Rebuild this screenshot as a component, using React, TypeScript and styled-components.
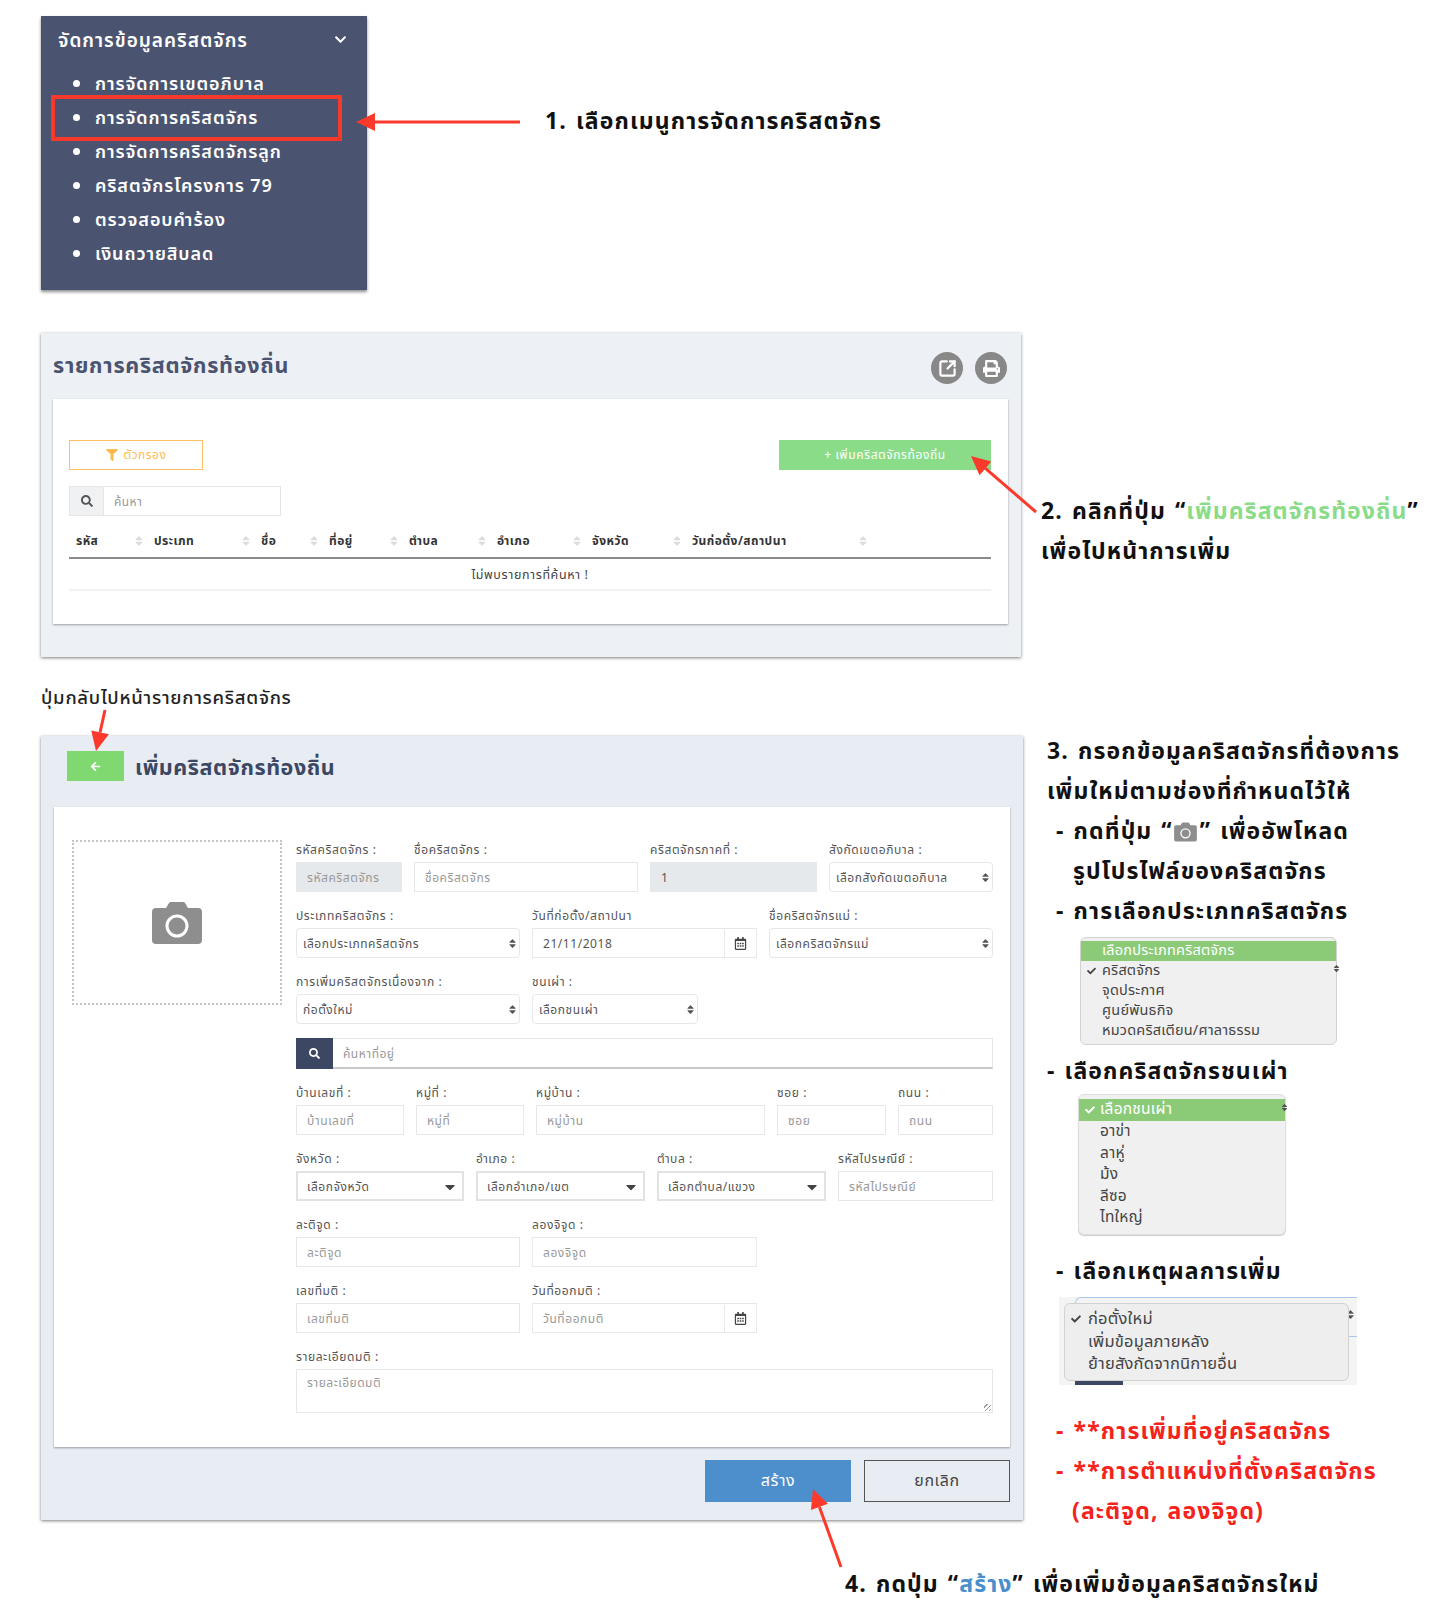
import React from "react";
import styled, { createGlobalStyle } from "styled-components";
import { SquareArrowOutUpRight } from "lucide-react";
import { FaArrowLeft, FaCaretDown, FaCheck, FaChevronDown, FaFilter, FaPrint, FaRegCalendarAlt, FaSearch, FaSort } from "react-icons/fa";

const FONT = `"Noto Sans Thai", "Noto Sans", "Open Sans", sans-serif`;

const Global = createGlobalStyle`
  html, body { margin: 0; padding: 0; background: #fff; }
  body { font-family: ${FONT}; color: #111; }
  * { box-sizing: border-box; }
`;

const Page = styled.div`
  position: relative;
  width: 1440px;
  height: 1609px;
  overflow: hidden;
  padding: 16px 0 0 41px;
`;
const Row = styled.section<{ $mt?: number }>`
  display: flex;
  align-items: flex-start;
  margin-top: ${(p) => p.$mt ?? 0}px;
`;

/* annotation text */
const Note = styled.div<{ $indent?: number; $red?: boolean }>`
  font-size: 23px;
  font-weight: 700;
  line-height: 40px;
  height: 40px;
  letter-spacing: 1.1px;
  word-spacing: 2px;
  white-space: nowrap;
  padding-left: ${(p) => p.$indent ?? 0}px;
  color: ${(p) => (p.$red ? "#f4231c" : "#111")};
`;
const Green = styled.span`color: #8bdc88;`;
const Blue = styled.span`color: #4a8ecb;`;

/* sidebar */
const Sidebar = styled.nav`
  position: relative;
  width: 326px;
  height: 274px;
  background: #4a5470;
  box-shadow: 0 2px 3px rgba(0, 0, 0, 0.45);
  padding: 11px 0 0 17px;
  color: #fff;
`;
const SideHead = styled.div`
  display: flex;
  align-items: center;
  justify-content: space-between;
  height: 28px;
  font-size: 19px;
  font-weight: 600;
  letter-spacing: 1px;
  padding-right: 20px;
  svg { margin-top: -4px; }
`;
const SideList = styled.ul`
  list-style: none;
  margin: 13px 0 0;
  padding: 0;
`;
const SideItem = styled.li`
  position: relative;
  height: 34px;
  line-height: 34px;
  padding-left: 37px;
  font-size: 18px;
  font-weight: 600;
  letter-spacing: 0.9px;
  &::before {
    content: "";
    position: absolute;
    left: 15px;
    top: 12px;
    width: 7px;
    height: 7px;
    border-radius: 50%;
    background: #fff;
  }
`;
const Highlight = styled.div`
  position: absolute;
  left: 10px;
  top: 79px;
  width: 291px;
  height: 46px;
  border: 4px solid #f7392b;
`;
const Note1 = styled.div`
  margin: 86px 0 0 178px;
`;

/* shared panels */
const Panel = styled.div<{ $w: number; $bg: string }>`
  width: ${(p) => p.$w}px;
  background: ${(p) => p.$bg};
  box-shadow: 0 1px 3px rgba(0, 0, 0, 0.5);
  flex: none;
`;
const Card = styled.div`
  background: #fff;
  box-shadow: 0 1px 2px rgba(0, 0, 0, 0.35);
`;

/* list panel */
const ListHead = styled.div`
  height: 66px;
  display: flex;
  justify-content: space-between;
  padding: 19px 14px 0 12px;
`;
const ListTitle = styled.h2`
  margin: -1px 0 0;
  font-size: 21.5px;
  line-height: 32px;
  font-weight: 700;
  letter-spacing: 0.75px;
  color: #4a5470;
`;
const RoundIcons = styled.div`
  display: flex;
  gap: 12px;
`;
const RoundIcon = styled.span`
  width: 32px;
  height: 32px;
  border-radius: 50%;
  background: #888;
  color: #fff;
  display: flex;
  align-items: center;
  justify-content: center;
`;
const ListCard = styled(Card)`
  margin: 0 13px 33px 12px;
  height: 225px;
  padding: 41px 17px 0 16px;
`;
const Actions = styled.div`
  display: flex;
  justify-content: space-between;
`;
const FilterBtn = styled.div`
  width: 134px;
  height: 30px;
  border: 1px solid #fdc163;
  color: #fdbb50;
  font-size: 12px;
  letter-spacing: 0.5px;
  display: flex;
  align-items: center;
  justify-content: center;
  gap: 6px;
`;
const AddBtn = styled.div`
  width: 212px;
  height: 30px;
  background: #8bdc88;
  color: #fff;
  font-size: 12px;
  letter-spacing: 0.6px;
  display: flex;
  align-items: center;
  justify-content: center;
`;
const SearchBox = styled.div`
  margin-top: 16px;
  width: 212px;
  height: 30px;
  display: flex;
  border: 1px solid #e6e6e6;
`;
const SearchAddon = styled.span`
  width: 34px;
  background: #f0f1f3;
  border-right: 1px solid #e6e6e6;
  color: #555;
  display: flex;
  align-items: center;
  justify-content: center;
`;
const SearchHint = styled.span`
  padding-left: 10px;
  font-size: 12px;
  letter-spacing: 0.4px;
  line-height: 30px;
  color: #999;
`;
const TableHead = styled.div`
  display: grid;
  grid-template-columns: 78px 107px 68px 80px 88px 95px 100px 186px 1fr;
  height: 43px;
  border-bottom: 2px solid #8a8a8a;
  padding-top: 14px;
`;
const Th = styled.div`
  display: flex;
  justify-content: space-between;
  padding: 0 2px 0 7px;
  height: 22px;
  align-items: center;
  font-size: 12px;
  font-weight: 700;
  color: #333;
  letter-spacing: 0.45px;
  white-space: nowrap;
  svg { color: #dcdcdc; }
`;
const EmptyRow = styled.div`
  height: 32px;
  line-height: 33px;
  text-align: center;
  font-size: 12.5px;
  color: #444;
  border-bottom: 2px solid #f1f1f1;
  letter-spacing: 0.6px;
`;
const Note2 = styled.div`
  margin: 159px 0 0 20px;
`;
const BackNote = styled.div`
  margin-top: 29px;
  height: 50px;
  font-size: 18.5px;
  line-height: 24px;
  letter-spacing: 0.75px;
  font-weight: 500;
  color: #222;
`;

/* form panel */
const FormHead = styled.div`
  height: 71px;
  display: flex;
  gap: 11px;
  padding: 15px 0 0 26px;
`;
const BackBtn = styled.span`
  width: 57px;
  height: 30px;
  background: #80d870;
  color: #fff;
  display: flex;
  align-items: center;
  justify-content: center;
`;
const FormTitle = styled.h2`
  margin: 0;
  font-size: 21.5px;
  line-height: 36px;
  font-weight: 700;
  letter-spacing: 0.6px;
  color: #3c4763;
`;
const FormCard = styled(Card)`
  margin: 0 13px;
  height: 640px;
  display: flex;
  gap: 14px;
  padding: 33px 17px 0 18px;
`;
const PhotoBox = styled.div`
  flex: none;
  width: 210px;
  height: 165px;
  border: 2px dotted #c4c4c4;
  display: flex;
  align-items: center;
  justify-content: center;
`;
const FormBody = styled.div`
  width: 697px;
  display: flex;
  flex-direction: column;
  gap: 14px;
`;
const FieldRow = styled.div<{ $cols: string }>`
  display: grid;
  grid-template-columns: ${(p) => p.$cols};
  column-gap: 12px;
`;
const Label = styled.div`
  height: 22px;
  line-height: 20px;
  font-size: 12px;
  color: #555;
  letter-spacing: 0.6px;
  white-space: nowrap;
`;
const BoxBase = styled.div`
  height: 30px;
  display: flex;
  align-items: center;
  font-size: 12px;
  letter-spacing: 0.55px;
  white-space: nowrap;
  padding-top: 1px;
`;
const TextBox = styled(BoxBase)<{ $off?: boolean; $value?: boolean }>`
  border: 1px solid ${(p) => (p.$off ? "#e6e9eb" : "#e7e7e7")};
  background: ${(p) => (p.$off ? "#e6e9eb" : "#fff")};
  padding-left: 10px;
  color: ${(p) => (p.$value ? "#555" : "#999")};
`;
const NativeSelect = styled(BoxBase)`
  border: 1px solid #e7e7e7;
  border-radius: 4px;
  padding-right: 1px;
  padding-left: 6px;
  justify-content: space-between;
  color: #555;
`;
const DropSelect = styled(BoxBase)`
  border: 2px solid #e2e2e2;
  padding-right: 4px;
  padding-left: 9px;
  justify-content: space-between;
  color: #555;
`;
const DateBox = styled(BoxBase)`
  border: 1px solid #e7e7e7;
  color: #555;
`;
const DateText = styled.span<{ $hint?: boolean }>`
  flex: 1;
  padding-left: 10px;
  color: ${(p) => (p.$hint ? "#999" : "#555")};
`;
const DateAddon = styled.span`
  width: 32px;
  height: 100%;
  border-left: 1px solid #e7e7e7;
  color: #444;
  display: flex;
  align-items: center;
  justify-content: center;
`;
const AddressSearch = styled.div`
  height: 31px;
  display: flex;
  border: 1px solid #e7e7e7;
  border-bottom: 2px solid #c8c8c8;
`;
const AddressBtn = styled.span`
  width: 37px;
  margin: -1px 0 -2px -1px;
  background: #3c4763;
  color: #fff;
  display: flex;
  align-items: center;
  justify-content: center;
`;
const AddressHint = styled.span`
  padding-left: 10px;
  font-size: 12px;
  letter-spacing: 0.5px;
  line-height: 31px;
  color: #999;
`;
const TextArea = styled.div`
  position: relative;
  height: 44px;
  border: 1px solid #e7e7e7;
  padding: 4px 10px;
  font-size: 12px;
  letter-spacing: 0.5px;
  color: #999;
  &::after {
    content: "";
    position: absolute;
    right: 1px;
    bottom: 1px;
    width: 7px;
    height: 7px;
    background: repeating-linear-gradient(135deg, transparent 0 2px, #999 2px 3px);
  }
`;
const FormFoot = styled.div`
  display: flex;
  justify-content: flex-end;
  gap: 13px;
  padding: 13px 13px 18px 0;
`;
const PrimaryBtn = styled.div`
  width: 146px;
  height: 42px;
  background: #4d8ecc;
  color: #fff;
  font-size: 16px;
  letter-spacing: 0.6px;
  display: flex;
  align-items: center;
  justify-content: center;
`;
const GhostBtn = styled(PrimaryBtn)`
  background: transparent;
  border: 1px solid #555;
  color: #444;
`;

/* right notes */
const SideNotes = styled.div`
  margin: -4px 0 0 24px;
`;
const ClipA = styled.div`
  position: relative;
  margin: 5px 0 7px 33px;
  width: 257px;
  height: 108px;
  padding-top: 3px;
  background: #f0f0f0;
  border: 1px solid #d2d2d2;
  border-radius: 6px;
`;
const ClipB = styled.div`
  position: relative;
  margin: 2px 0 17px 31px;
  width: 208px;
  height: 141px;
  padding-top: 4px;
  background: #f0f0f0;
  border: 1px solid #ddd;
  border-radius: 6px;
  box-shadow: 0 1px 1px rgba(0, 0, 0, 0.2);
`;
const ClipC = styled.div`
  position: relative;
  margin: 5px 0 27px 12px;
  width: 298px;
  height: 88px;
  padding: 6px 8px 0 5px;
  background: #f4f4f4;
`;
const BehindField = styled.div`
  position: absolute;
  left: 16px;
  right: 0;
  top: 0;
  height: 40px;
  border: 1px solid #a8c8ee;
  border-right: none;
  border-top-left-radius: 6px;
`;
const BehindChip = styled.div`
  position: absolute;
  left: 16px;
  bottom: 0;
  width: 48px;
  height: 6px;
  background: #3c4763;
`;
const Popup = styled.div`
  position: relative;
  height: 78px;
  padding-top: 3px;
  background: #eeeeee;
  border: 1px solid #d2d2d2;
  border-radius: 6px;
`;
const Option = styled.div<{ $on?: boolean; $h: number; $size: number; $pad: number }>`
  position: relative;
  height: ${(p) => p.$h}px;
  line-height: ${(p) => p.$h}px;
  font-size: ${(p) => p.$size}px;
  letter-spacing: 0.2px;
  padding-left: ${(p) => p.$pad}px;
  background: ${(p) => (p.$on ? "#8bcb78" : "transparent")};
  color: ${(p) => (p.$on ? "#fff" : "#444")};
  white-space: nowrap;
`;
const Tick = styled(FaCheck)`
  position: absolute;
  left: 6px;
  top: 50%;
  transform: translateY(-50%);
`;
const EdgeSpinner = styled.span<{ $top: number; $right: number }>`
  position: absolute;
  top: ${(p) => p.$top}px;
  right: ${(p) => p.$right}px;
  color: #555;
  line-height: 0;
`;
const InlineCamera = styled.span`
  display: inline-block;
  vertical-align: -3px;
  margin: 0 3px 0 1px;
`;
const BottomNote = styled.div`
  margin: 33px 0 0 804px;
  letter-spacing: 0;
`;
const Overlay = styled.svg`
  position: absolute;
  left: 0;
  top: 0;
  pointer-events: none;
`;

const Camera = ({ w, h, ring = "#fff" }: { w: number; h: number; ring?: string }) => (
  <svg width={w} height={h} viewBox="0 0 50 44" aria-hidden style={{ display: "block" }}>
    <path d="M4 7h10l3-5a2 2 0 0 1 2-1h12a2 2 0 0 1 2 1l3 5h10a4 4 0 0 1 4 4v28a4 4 0 0 1-4 4H4a4 4 0 0 1-4-4V11a4 4 0 0 1 4-4z" fill="#8e8e8e" />
    <circle cx="25" cy="25" r="10" fill="none" stroke={ring} strokeWidth="3" />
  </svg>
);

const Arrow = ({ x1, y1, x2, y2, len = 19, half = 9, w = 3 }: { x1: number; y1: number; x2: number; y2: number; len?: number; half?: number; w?: number }) => {
  const d = Math.hypot(x2 - x1, y2 - y1);
  const ux = (x2 - x1) / d;
  const uy = (y2 - y1) / d;
  const bx = x2 - ux * len;
  const by = y2 - uy * len;
  const pts = `${x2},${y2} ${bx - uy * half},${by + ux * half} ${bx + uy * half},${by - ux * half}`;
  return (
    <g>
      <line x1={x1} y1={y1} x2={bx} y2={by} stroke="#fb3a2c" strokeWidth={w} />
      <polygon points={pts} fill="#fb3a2c" />
    </g>
  );
};

const SortMark = () => <FaSort size={12} />;
const Spinner = () => <FaSort size={11} color="#555" />;
const Cal = () => <FaRegCalendarAlt size={13} />;

type F = { label: string; hint: string };
const Plain = ({ label, hint }: F) => (
  <div>
    <Label>{label}</Label>
    <TextBox>{hint}</TextBox>
  </div>
);
const Sel = ({ label, hint }: F) => (
  <div>
    <Label>{label}</Label>
    <NativeSelect>
      {hint}
      <Spinner />
    </NativeSelect>
  </div>
);
const Drop = ({ label, hint }: F) => (
  <div>
    <Label>{label}</Label>
    <DropSelect>
      {hint}
      <FaCaretDown size={16} color="#444" />
    </DropSelect>
  </div>
);
const DateF = ({ label, value, hint }: { label: string; value: string; hint?: boolean }) => (
  <div>
    <Label>{label}</Label>
    <DateBox>
      <DateText $hint={hint}>{value}</DateText>
      <DateAddon>
        <Cal />
      </DateAddon>
    </DateBox>
  </div>
);

const heads = ["รหัส", "ประเภท", "ชื่อ", "ที่อยู่", "ตำบล", "อำเภอ", "จังหวัด", "วันก่อตั้ง/สถาปนา"];

export default function App() {
  return (
    <Page>
      <Global />
      <Row>
        <Sidebar>
          <SideHead>
            จัดการข้อมูลคริสตจักร
            <FaChevronDown size={13} />
          </SideHead>
          <SideList>
            <SideItem>การจัดการเขตอภิบาล</SideItem>
            <SideItem>การจัดการคริสตจักร</SideItem>
            <SideItem>การจัดการคริสตจักรลูก</SideItem>
            <SideItem>คริสตจักรโครงการ 79</SideItem>
            <SideItem>ตรวจสอบคำร้อง</SideItem>
            <SideItem>เงินถวายสิบลด</SideItem>
          </SideList>
          <Highlight />
        </Sidebar>
        <Note1>
          <Note>1. เลือกเมนูการจัดการคริสตจักร</Note>
        </Note1>
      </Row>

      <Row $mt={43}>
        <Panel $w={980} $bg="#edf0f5">
          <ListHead>
            <ListTitle>รายการคริสตจักรท้องถิ่น</ListTitle>
            <RoundIcons>
              <RoundIcon>
                <SquareArrowOutUpRight size={19} strokeWidth={2.8} />
              </RoundIcon>
              <RoundIcon>
                <FaPrint size={17} />
              </RoundIcon>
            </RoundIcons>
          </ListHead>
          <ListCard>
            <Actions>
              <FilterBtn>
                <FaFilter size={12} />
                ตัวกรอง
              </FilterBtn>
              <AddBtn>+ เพิ่มคริสตจักรท้องถิ่น</AddBtn>
            </Actions>
            <SearchBox>
              <SearchAddon>
                <FaSearch size={12} />
              </SearchAddon>
              <SearchHint>ค้นหา</SearchHint>
            </SearchBox>
            <TableHead>
              {heads.map((h) => (
                <Th key={h}>
                  {h}
                  <SortMark />
                </Th>
              ))}
            </TableHead>
            <EmptyRow>ไม่พบรายการที่ค้นหา !</EmptyRow>
          </ListCard>
        </Panel>
        <Note2>
          <Note>
            2. คลิกที่ปุ่ม “<Green>เพิ่มคริสตจักรท้องถิ่น</Green>”
          </Note>
          <Note>เพื่อไปหน้าการเพิ่ม</Note>
        </Note2>
      </Row>

      <BackNote>ปุ่มกลับไปหน้ารายการคริสตจักร</BackNote>

      <Row>
        <Panel $w={982} $bg="#e8ecf3">
          <FormHead>
            <BackBtn>
              <FaArrowLeft size={11} />
            </BackBtn>
            <FormTitle>เพิ่มคริสตจักรท้องถิ่น</FormTitle>
          </FormHead>
          <FormCard>
            <PhotoBox>
              <Camera w={50} h={44} />
            </PhotoBox>
            <FormBody>
              <FieldRow $cols="106px 224px 167px 164px">
                <div>
                  <Label>รหัสคริสตจักร :</Label>
                  <TextBox $off>รหัสคริสตจักร</TextBox>
                </div>
                <Plain label="ชื่อคริสตจักร :" hint="ชื่อคริสตจักร" />
                <div>
                  <Label>คริสตจักรภาคที่ :</Label>
                  <TextBox $off $value>
                    1
                  </TextBox>
                </div>
                <Sel label="สังกัดเขตอภิบาล :" hint="เลือกสังกัดเขตอภิบาล" />
              </FieldRow>
              <FieldRow $cols="224px 225px 224px">
                <Sel label="ประเภทคริสตจักร :" hint="เลือกประเภทคริสตจักร" />
                <DateF label="วันที่ก่อตั้ง/สถาปนา" value="21/11/2018" />
                <Sel label="ชื่อคริสตจักรแม่ :" hint="เลือกคริสตจักรแม่" />
              </FieldRow>
              <FieldRow $cols="224px 166px">
                <Sel label="การเพิ่มคริสตจักรเนื่องจาก :" hint="ก่อตั้งใหม่" />
                <Sel label="ชนเผ่า :" hint="เลือกชนเผ่า" />
              </FieldRow>
              <AddressSearch>
                <AddressBtn>
                  <FaSearch size={11} />
                </AddressBtn>
                <AddressHint>ค้นหาที่อยู่</AddressHint>
              </AddressSearch>
              <FieldRow $cols="108px 108px 229px 109px 95px">
                <Plain label="บ้านเลขที่ :" hint="บ้านเลขที่" />
                <Plain label="หมู่ที่ :" hint="หมู่ที่" />
                <Plain label="หมู่บ้าน :" hint="หมู่บ้าน" />
                <Plain label="ซอย :" hint="ซอย" />
                <Plain label="ถนน :" hint="ถนน" />
              </FieldRow>
              <FieldRow $cols="168px 169px 169px 155px">
                <Drop label="จังหวัด :" hint="เลือกจังหวัด" />
                <Drop label="อำเภอ :" hint="เลือกอำเภอ/เขต" />
                <Drop label="ตำบล :" hint="เลือกตำบล/แขวง" />
                <Plain label="รหัสไปรษณีย์ :" hint="รหัสไปรษณีย์" />
              </FieldRow>
              <FieldRow $cols="224px 225px">
                <Plain label="ละติจูด :" hint="ละติจูด" />
                <Plain label="ลองจิจูด :" hint="ลองจิจูด" />
              </FieldRow>
              <FieldRow $cols="224px 225px">
                <Plain label="เลขที่มติ :" hint="เลขที่มติ" />
                <DateF label="วันที่ออกมติ :" value="วันที่ออกมติ" hint />
              </FieldRow>
              <div>
                <Label>รายละเอียดมติ :</Label>
                <TextArea>รายละเอียดมติ</TextArea>
              </div>
            </FormBody>
          </FormCard>
          <FormFoot>
            <PrimaryBtn>สร้าง</PrimaryBtn>
            <GhostBtn>ยกเลิก</GhostBtn>
          </FormFoot>
        </Panel>

        <SideNotes>
          <Note>3. กรอกข้อมูลคริสตจักรที่ต้องการ</Note>
          <Note>เพิ่มใหม่ตามช่องที่กำหนดไว้ให้</Note>
          <Note $indent={9}>
            - กดที่ปุ่ม “
            <InlineCamera>
              <Camera w={23} h={20} />
            </InlineCamera>
            ” เพื่ออัพโหลด
          </Note>
          <Note $indent={26}>รูปโปรไฟล์ของคริสตจักร</Note>
          <Note $indent={9}>- การเลือกประเภทคริสตจักร</Note>
          <ClipA>
            <Option $on $h={20} $size={14.5} $pad={21}>เลือกประเภทคริสตจักร</Option>
            <Option $h={20} $size={14.5} $pad={21}>
              <Tick size={9} />
              คริสตจักร
            </Option>
            <Option $h={20} $size={14.5} $pad={21}>จุดประกาศ</Option>
            <Option $h={20} $size={14.5} $pad={21}>ศูนย์พันธกิจ</Option>
            <Option $h={20} $size={14.5} $pad={21}>หมวดคริสเตียน/ศาลาธรรม</Option>
            <EdgeSpinner $top={26} $right={-5}>
              <FaSort size={9} />
            </EdgeSpinner>
          </ClipA>
          <Note>- เลือกคริสตจักรชนเผ่า</Note>
          <ClipB>
            <Option $on $h={22} $size={15.5} $pad={21}>
              <Tick size={10} />
              เลือกชนเผ่า
            </Option>
            <Option $h={21.6} $size={15.5} $pad={21}>อาข่า</Option>
            <Option $h={21.6} $size={15.5} $pad={21}>ลาหู่</Option>
            <Option $h={21.6} $size={15.5} $pad={21}>ม้ง</Option>
            <Option $h={21.6} $size={15.5} $pad={21}>ลีซอ</Option>
            <Option $h={21.6} $size={15.5} $pad={21}>ไทใหญ่</Option>
            <EdgeSpinner $top={8} $right={-4}>
              <FaSort size={9} />
            </EdgeSpinner>
          </ClipB>
          <Note $indent={9}>- เลือกเหตุผลการเพิ่ม</Note>
          <ClipC>
            <BehindField />
            <BehindChip />
            <EdgeSpinner $top={12} $right={1}>
              <FaSort size={11} />
            </EdgeSpinner>
            <Popup>
              <Option $h={24} $size={16.5} $pad={23}>
                <Tick size={10} />
                ก่อตั้งใหม่
              </Option>
              <Option $h={22} $size={16.5} $pad={23}>เพิ่มข้อมูลภายหลัง</Option>
              <Option $h={22} $size={16.5} $pad={23}>ย้ายสังกัดจากนิกายอื่น</Option>
            </Popup>
          </ClipC>
          <Note $indent={9} $red>- **การเพิ่มที่อยู่คริสตจักร</Note>
          <Note $indent={9} $red>- **การตำแหน่งที่ตั้งคริสตจักร</Note>
          <Note $indent={25} $red>(ละติจูด, ลองจิจูด)</Note>
        </SideNotes>
      </Row>

      <BottomNote>
        <Note>
          4. กดปุ่ม “<Blue>สร้าง</Blue>” เพื่อเพิ่มข้อมูลคริสตจักรใหม่
        </Note>
      </BottomNote>

      <Overlay width={1440} height={1609} aria-hidden>
        <Arrow x1={520} y1={122} x2={356} y2={122} />
        <Arrow x1={1036} y1={512} x2={971} y2={456} />
        <Arrow x1={105} y1={710} x2={96} y2={751} />
        <Arrow x1={841} y1={1567} x2={813} y2={1489} />
      </Overlay>
    </Page>
  );
}
